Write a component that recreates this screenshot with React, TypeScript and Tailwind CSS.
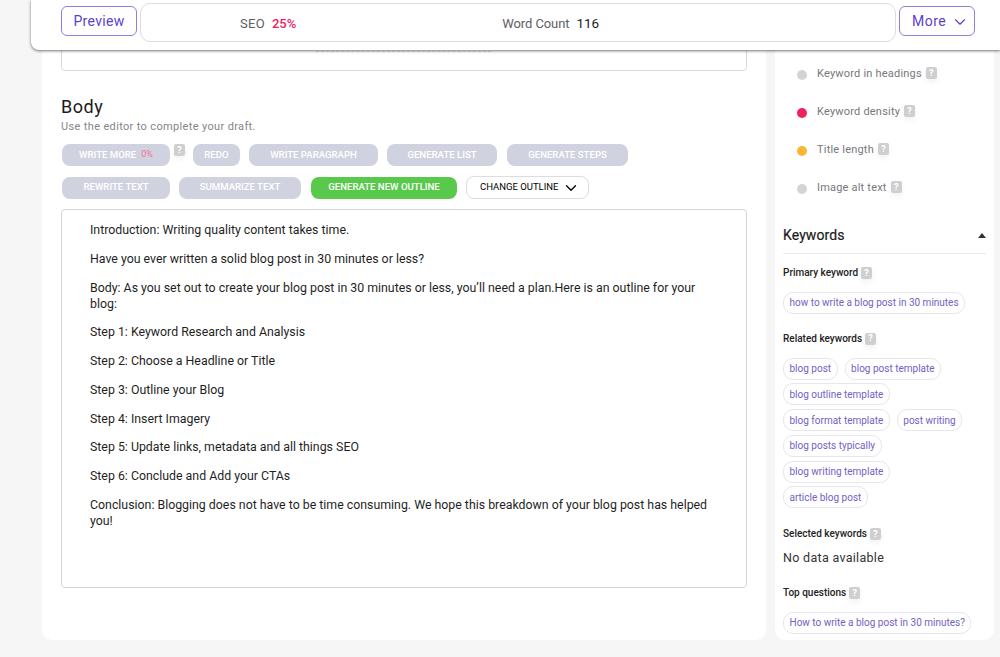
import { ChevronDown } from 'lucide-react';

const FONT = "font-['Roboto',sans-serif]";

const STEPS = [
  'Introduction: Writing quality content takes time.',
  'Have you ever written a solid blog post in 30 minutes or less?',
  'Body: As you set out to create your blog post in 30 minutes or less, you\u2019ll need a plan.Here is an outline for your blog:',
  'Step 1: Keyword Research and Analysis',
  'Step 2: Choose a Headline or Title',
  'Step 3: Outline your Blog',
  'Step 4: Insert Imagery',
  'Step 5: Update links, metadata and all things SEO',
  'Step 6: Conclude and Add your CTAs',
  'Conclusion: Blogging does not have to be time consuming. We hope this breakdown of your blog post has helped you!',
];

const CHECKS = [
  { label: 'Keyword in headings', dot: 'bg-[#d4d4d4]' },
  { label: 'Keyword density', dot: 'bg-[#f0215f]' },
  { label: 'Title length', dot: 'bg-[#f8b632]' },
  { label: 'Image alt text', dot: 'bg-[#d4d4d4]' },
];

const RELATED = [
  'blog post',
  'blog post template',
  'blog outline template',
  'blog format template',
  'post writing',
  'blog posts typically',
  'blog writing template',
  'article blog post',
];

function Help() {
  return (
    <span className="flex h-[12px] w-[11px] shrink-0 items-center justify-center rounded-[2px] bg-[#cfcfcf] text-[9px] font-bold leading-none text-white shadow-[0_3px_6px_rgba(0,0,0,0.06)]">
      ?
    </span>
  );
}

function GreyButton({ label, width }: { label: string; width: string }) {
  return (
    <button className={`flex h-[22px] items-center justify-center rounded-[8px] bg-[#d1d2e0] text-[9.6px] font-medium text-white ${width}`}>
      {label}
    </button>
  );
}

function Chip({ label }: { label: string }) {
  return (
    <span className="inline-flex h-[22px] items-center whitespace-nowrap rounded-[10px] border border-[#e6e6ec] bg-white px-[5.5px] text-[10px] text-[#7461c4]">
      {label}
    </span>
  );
}

function SubHead({ label }: { label: string }) {
  return (
    <div className="flex items-center gap-[3px] text-[10px] font-medium leading-[12px] text-[#222]">
      {label}
      <Help />
    </div>
  );
}

export default function App() {
  return (
    <div className={`relative flex h-[657px] w-[1000px] gap-[9px] overflow-hidden bg-[#f6f6f6] pl-[42px] ${FONT}`}>
      <main className="h-[640px] w-[724px] overflow-hidden rounded-b-[10px] bg-white pl-[19px] pr-[19px]">
        <div className="relative h-[71px] rounded-b-[4px] border border-[#d9d9d9]">
          <div className="absolute left-[254px] top-[50px] w-[175px] border-t border-dashed border-[#dcdcdc]" />
        </div>
        <h2 className="mt-[25px] text-[18px] leading-[21px] tracking-[0.5px] text-[#1b1b1b]">Body</h2>
        <p className="mt-[3px] text-[11px] leading-[14px] tracking-[0.35px] text-[#85858b]">Use the editor to complete your draft.</p>

        <div className="mt-[10px] flex items-start pl-[1px]">
          <button className="flex h-[22px] w-[108px] items-center justify-center gap-[5px] rounded-[8px] bg-[#d1d2e0] text-[9.6px] font-medium text-white">
            WRITE MORE <span className="text-[9px] font-normal text-[#f76c98]">0%</span>
          </button>
          <div className="ml-[4px] mr-[8px]"><Help /></div>
          <GreyButton label="REDO" width="w-[47px]" />
          <span className="w-[9px]" />
          <GreyButton label="WRITE PARAGRAPH" width="w-[129px]" />
          <span className="w-[9px]" />
          <GreyButton label="GENERATE LIST" width="w-[110px]" />
          <span className="w-[10px]" />
          <GreyButton label="GENERATE STEPS" width="w-[121px]" />
        </div>

        <div className="mt-[10px] flex items-center pl-[1px]">
          <GreyButton label="REWRITE TEXT" width="w-[108px]" />
          <span className="w-[9px]" />
          <GreyButton label="SUMMARIZE TEXT" width="w-[122px]" />
          <span className="w-[10px]" />
          <button className="flex h-[22px] w-[146px] items-center justify-center rounded-[8px] bg-[#59c94b] text-[9.6px] font-medium text-white">
            GENERATE NEW OUTLINE
          </button>
          <span className="w-[9px]" />
          <button className="flex h-[23px] w-[123px] items-center gap-[3px] rounded-[8px] border border-[#dcdce2] bg-white pl-[13px] text-[9.5px] text-black">
            CHANGE OUTLINE
            <ChevronDown size={18} strokeWidth={1.75} />
          </button>
        </div>

        <div className="mt-[10px] h-[379px] rounded-[4px] border border-[#d4d4d4] pl-[28px] pr-[28px] pt-[12px]">
          {STEPS.map((line) => (
            <p key={line} className="mb-[12.75px] text-[12.35px] leading-[16px] text-[#1f1f1f]">
              {line}
            </p>
          ))}
        </div>
      </main>

      <aside className="h-[640px] w-[219px] overflow-hidden rounded-b-[10px] bg-white pl-[8px] pr-[8px]">
        <div className="flex flex-col gap-[23px] pl-[14px] pt-[67px]">
          {CHECKS.map((check) => (
            <div key={check.label} className="flex h-[15px] items-center">
              <span className={`h-[10px] w-[10px] rounded-full ${check.dot}`} />
              <span className="ml-[10px] text-[11px] tracking-[0.2px] text-[#77777c]">{check.label}</span>
              <div className="ml-[4px] -mt-[3px]"><Help /></div>
            </div>
          ))}
        </div>

        <div className="mt-[30px] flex h-[28px] items-start justify-between border-b border-[#ececec]">
          <span className="text-[14px] leading-[18px] tracking-[0.1px] text-[#1c1c1c] [-webkit-text-stroke:0.2px_#1c1c1c]">Keywords</span>
          <span className="mt-[7px] h-0 w-0 border-x-[4px] border-b-[5px] border-x-transparent border-b-[#333]" />
        </div>

        <div className="mt-[13px]"><SubHead label="Primary keyword" /></div>
        <div className="mt-[10px]"><Chip label="how to write a blog post in 30 minutes" /></div>

        <div className="mt-[19px]"><SubHead label="Related keywords" /></div>
        <div className="mt-[13px] flex flex-wrap gap-x-[7px] gap-y-[3.8px] pr-[16px]">
          {RELATED.map((keyword) => (
            <Chip key={keyword} label={keyword} />
          ))}
        </div>

        <div className="mt-[20px]"><SubHead label="Selected keywords" /></div>
        <p className="mt-[10px] text-[12.5px] leading-[15px] tracking-[0.3px] text-[#333]">No data available</p>
        <div className="mt-[22px]"><SubHead label="Top questions" /></div>
        <div className="mt-[10px]"><Chip label="How to write a blog post in 30 minutes?" /></div>
      </aside>

      <header className="absolute left-[31px] right-0 top-0 flex h-[50px] items-start rounded-bl-[8px] bg-white pl-[30px] pr-[25px] pt-[3px] shadow-[0_1px_3px_rgba(0,0,0,0.55)]">
        <button className="mt-[3px] h-[30px] w-[76px] rounded-[6px] border border-[#8f7fdc] text-[14px] leading-[20px] tracking-[0.3px] text-[#5b3fc8]">
          Preview
        </button>
        <div className="ml-[3px] flex h-[39px] w-[756px] items-center rounded-[10px] border border-[#dcdcdc] pl-[99px] pt-[2px] text-[13px] tracking-[0.3px] text-[#5e5e63]">
          <span>SEO</span>
          <span className="ml-[7px] font-medium tracking-[0px] text-[#f0215f]">25%</span>
          <span className="ml-[206px] tracking-[-0.1px]">Word Count</span>
          <span className="ml-[7px] text-[13.5px] tracking-[0px] text-[#222]">116</span>
        </div>
        <button className="ml-[3px] mt-[3px] flex h-[30px] w-[76px] items-center gap-[5px] rounded-[6px] border border-[#8f7fdc] pl-[12px] pt-[1px] text-[14px] tracking-[0.5px] text-[#5b3fc8]">
          More
          <ChevronDown size={18} strokeWidth={1.5} />
        </button>
      </header>
    </div>
  );
}
